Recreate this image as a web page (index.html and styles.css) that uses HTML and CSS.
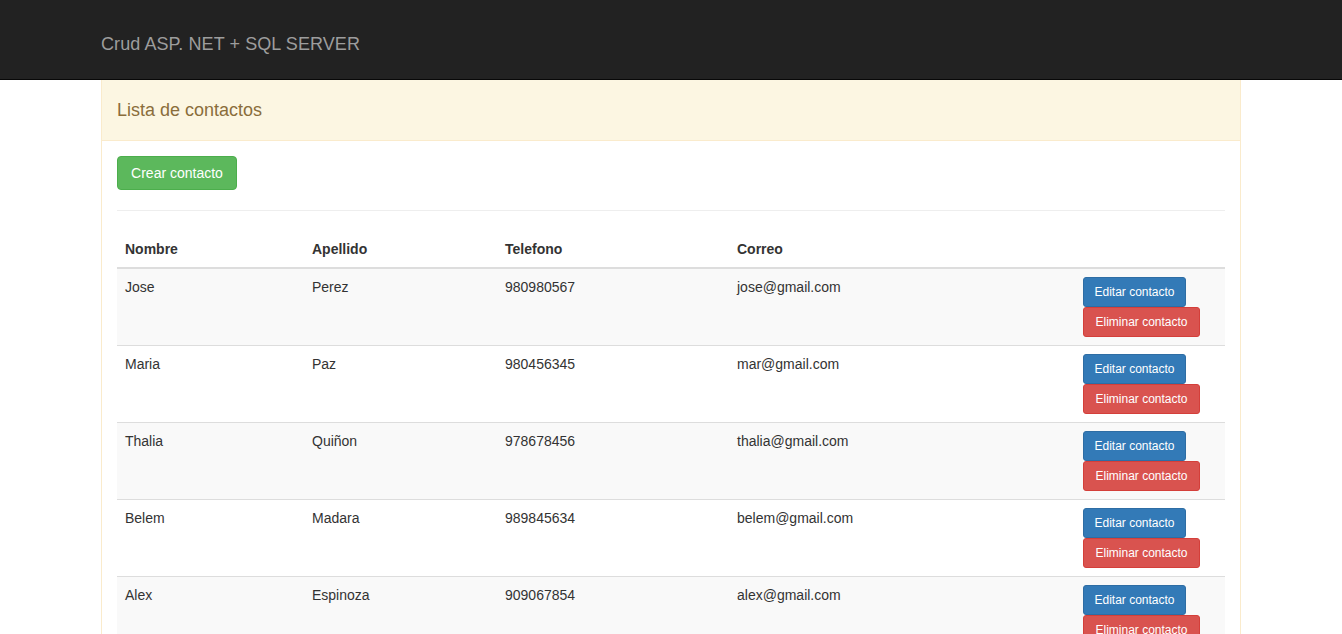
FILE: index.html
```html
<!DOCTYPE html>
<html lang="es">
<head>
<meta charset="utf-8">
<title>Crud ASP. NET + SQL SERVER</title>
<link rel="stylesheet" href="styles.css">
</head>
<body>
<nav class="navbar">
  <div class="container">
    <span class="brand">Crud ASP. NET + SQL SERVER</span>
  </div>
</nav>
<div class="container">
  <div class="panel">
    <div class="panel-heading">Lista de contactos</div>
    <div class="panel-body">
      <button class="btn btn-success">Crear contacto</button>
      <hr class="sep">
      <table class="table">
        <thead>
          <tr><th class="c1">Nombre</th><th class="c2">Apellido</th><th class="c3">Telefono</th><th class="c4">Correo</th><th class="c5"></th></tr>
        </thead>
        <tbody>
          <tr><td>Jose</td><td>Perez</td><td>980980567</td><td>jose@gmail.com</td><td><button class="btn-sm btn-primary">Editar contacto</button><br><button class="btn-sm btn-danger">Eliminar contacto</button></td></tr>
          <tr><td>Maria</td><td>Paz</td><td>980456345</td><td>mar@gmail.com</td><td><button class="btn-sm btn-primary">Editar contacto</button><br><button class="btn-sm btn-danger">Eliminar contacto</button></td></tr>
          <tr><td>Thalia</td><td>Quiñon</td><td>978678456</td><td>thalia@gmail.com</td><td><button class="btn-sm btn-primary">Editar contacto</button><br><button class="btn-sm btn-danger">Eliminar contacto</button></td></tr>
          <tr><td>Belem</td><td>Madara</td><td>989845634</td><td>belem@gmail.com</td><td><button class="btn-sm btn-primary">Editar contacto</button><br><button class="btn-sm btn-danger">Eliminar contacto</button></td></tr>
          <tr><td>Alex</td><td>Espinoza</td><td>909067854</td><td>alex@gmail.com</td><td><button class="btn-sm btn-primary">Editar contacto</button><br><button class="btn-sm btn-danger">Eliminar contacto</button></td></tr>
        </tbody>
      </table>
    </div>
  </div>
</div>
</body>
</html>
```
FILE: styles.css
```css
* { box-sizing: border-box; }
body {
  margin: 0;
  font-family: "Liberation Sans", Arial, sans-serif;
  font-size: 14px;
  line-height: 20px;
  color: #333;
  background: #fff;
}
.container {
  width: 1170px;
  margin: 0 auto;
  padding: 0 15px;
}
.navbar {
  background: #222;
  border-bottom: 1px solid #080808;
  height: 80px;
}
.navbar .container {
  height: 79px;
  display: flex;
  align-items: center;
}
.brand {
  color: #9d9d9d;
  font-size: 18px;
  line-height: 20px;
  padding-top: 9px;
  letter-spacing: 0.08px;
}
.panel {
  border: 1px solid #faebcc;
  border-top: none;
  background: #fff;
}
.panel-heading {
  background: #fcf6e2;
  color: #8a6d3b;
  border-bottom: 1px solid #faebcc;
  font-size: 18px;
  height: 61px;
  line-height: 20px;
  padding: 20px 15px 0;
}
.panel-body {
  padding: 15px;
}
.btn {
  font-family: inherit;
  font-size: 14px;
  line-height: 20px;
  padding: 6px 0;
  border: 1px solid transparent;
  border-radius: 4px;
  cursor: pointer;
  text-align: center;
}
.btn-success {
  width: 120px;
  background: #5cb85c;
  border-color: #4cae4c;
  color: #fff;
}
.sep {
  margin: 20px 0;
  border: 0;
  border-top: 1px solid #eee;
}
.table {
  width: 100%;
  border-collapse: collapse;
  border-spacing: 0;
}
.table th, .table td {
  text-align: left;
  vertical-align: top;
  padding: 8px;
  line-height: 20px;
}
.table th {
  font-weight: bold;
  border-bottom: 2px solid #ddd;
}
.table td {
  border-top: 1px solid #ddd;
}
.table tbody tr:first-child td { border-top: none; }
.table tbody tr:nth-child(odd) { background: #f9f9f9; }
.c1 { width: 187px; }
.c2 { width: 193px; }
.c3 { width: 232px; }
.c4 { width: 346px; }
.c5 { width: 150px; }
.btn-sm {
  font-family: inherit;
  font-size: 12px;
  line-height: 18px;
  padding: 5px 0;
  border: 1px solid transparent;
  border-radius: 3px;
  color: #fff;
  cursor: pointer;
  margin: 0;
  vertical-align: top;
  text-align: center;
}
.btn-primary {
  width: 103px;
  background: #337ab7;
  border-color: #2e6da4;
}
.btn-danger {
  width: 117px;
  background: #d9534f;
  border-color: #d43f3a;
}
```
